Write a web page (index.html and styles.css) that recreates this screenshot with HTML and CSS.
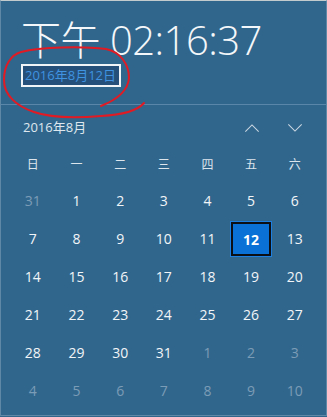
FILE: index.html
```html
<!DOCTYPE html>
<html lang="zh-CN">
<head>
<meta charset="utf-8">
<title>日期和时间</title>
<link rel="stylesheet" href="styles.css">
</head>
<body>
<div class="panel">
  <section class="clock">
    <div class="time">下午 02:16:37</div>
    <div class="date"><span class="sel">2016年8月12日</span></div>
  </section>
  <section class="cal">
    <div class="cal-head">
      <span class="month">2016年8月</span>
      <div class="nav">
        <svg class="chev" viewBox="0 0 16 9" width="16" height="8"><path d="M0.5 8.5 L8 1 L15.5 8.5" fill="none" stroke="#c9d6e0" stroke-width="1.2"/></svg>
        <svg class="chev" viewBox="0 0 16 9" width="16" height="8"><path d="M0.5 0.5 L8 8 L15.5 0.5" fill="none" stroke="#c9d6e0" stroke-width="1.2"/></svg>
      </div>
    </div>
    <div class="grid">
      <span class="wd">日</span><span class="wd">一</span><span class="wd">二</span><span class="wd">三</span><span class="wd">四</span><span class="wd">五</span><span class="wd">六</span>
      <span class="d dim">31</span><span class="d">1</span><span class="d">2</span><span class="d">3</span><span class="d">4</span><span class="d">5</span><span class="d">6</span>
      <span class="d">7</span><span class="d">8</span><span class="d">9</span><span class="d">10</span><span class="d">11</span><span class="d today"><b>12</b></span><span class="d">13</span>
      <span class="d">14</span><span class="d">15</span><span class="d">16</span><span class="d">17</span><span class="d">18</span><span class="d">19</span><span class="d">20</span>
      <span class="d">21</span><span class="d">22</span><span class="d">23</span><span class="d">24</span><span class="d">25</span><span class="d">26</span><span class="d">27</span>
      <span class="d">28</span><span class="d">29</span><span class="d">30</span><span class="d">31</span><span class="d dim">1</span><span class="d dim">2</span><span class="d dim">3</span>
      <span class="d dim">4</span><span class="d dim">5</span><span class="d dim">6</span><span class="d dim">7</span><span class="d dim">8</span><span class="d dim">9</span><span class="d dim">10</span>
    </div>
  </section>
  <svg class="annot" viewBox="0 0 150 125" width="150" height="125">
    <path d="M143 103 C135 112 120 115 100 116 C75 118 50 118 33 112 C15 106 3 95 3 80 C3 65 10 55 20 52 C40 47 80 46 105 49 C120 52 128 65 128 78 C127 92 115 100 100 106" fill="none" stroke="#e01b24" stroke-width="2" stroke-linecap="round"/>
  </svg>
</div>
</body>
</html>
```

FILE: styles.css
```css
html, body {
  margin: 0;
  padding: 0;
  background: #31668c;
}
body {
  font-family: "Open Sans", "Noto Sans", "Noto Sans CJK SC", sans-serif;
  color: #eef2f5;
}
.panel {
  position: relative;
  width: 325px;
  height: 414px;
  background: #31668c;
  border-top: 1px solid #c3cbcc;
  border-left: 1px solid #5f88a6;
  border-right: 1px solid #5f88a6;
  border-bottom: 1px solid #5f88a6;
  overflow: hidden;
}
.clock {
  height: 104px;
  border-bottom: 1px solid #5a87a9;
  padding: 0 0 0 20px;
  box-sizing: border-box;
}
.time {
  font-family: "Open Sans", "Noto Sans CJK SC", sans-serif;
  font-weight: 300;
  font-size: 40px;
  line-height: 40px;
  padding-top: 19px;
  letter-spacing: -0.5px;
  color: #f4f7f9;
  white-space: nowrap;
}
.date {
  margin-top: 4px;
  display: flex;
}
.sel {
  display: inline-block;
  border: 2px solid #f1f4f6;
  background: #25507a;
  color: #3f93e0;
  font-family: "Open Sans", "Noto Sans CJK SC", sans-serif;
  font-size: 13px;
  line-height: 19px;
  padding: 0 3px 0 2px;
  letter-spacing: 0;
}
.cal {
  padding: 0 0 0 10px;
}
.cal-head {
  height: 41px;
  display: flex;
  align-items: center;
  justify-content: space-between;
  padding: 0 23px 0 12px;
}
.month {
  font-family: "Open Sans", "Noto Sans CJK SC", sans-serif;
  font-size: 13px;
  color: #dfe7ee;
  margin-top: 2px;
}
.nav {
  display: flex;
  gap: 27px;
  align-items: center;
  margin-top: 4px;
}
.grid {
  display: grid;
  grid-template-columns: repeat(7, 43.67px);
  grid-template-rows: 35px repeat(6, 38px);
}
.grid span {
  display: flex;
  align-items: center;
  justify-content: center;
}
.wd {
  font-family: "Noto Sans CJK SC", sans-serif;
  font-size: 12px;
  color: #dde5ec;
}
.d {
  font-size: 14px;
  color: #f2f5f8;
}
.d.dim {
  color: #7b9cb6;
}
.d.today {
  margin: 3px 2px 1px 2px;
  background: #0a72d6;
  border: 2px solid #0c0f14;
  outline: 1px solid #1d7fe0;
  color: #ffffff;
}
.d.today b {
  font-weight: 700;
}
.annot {
  position: absolute;
  left: 0;
  top: -1px;
  pointer-events: none;
}
```
